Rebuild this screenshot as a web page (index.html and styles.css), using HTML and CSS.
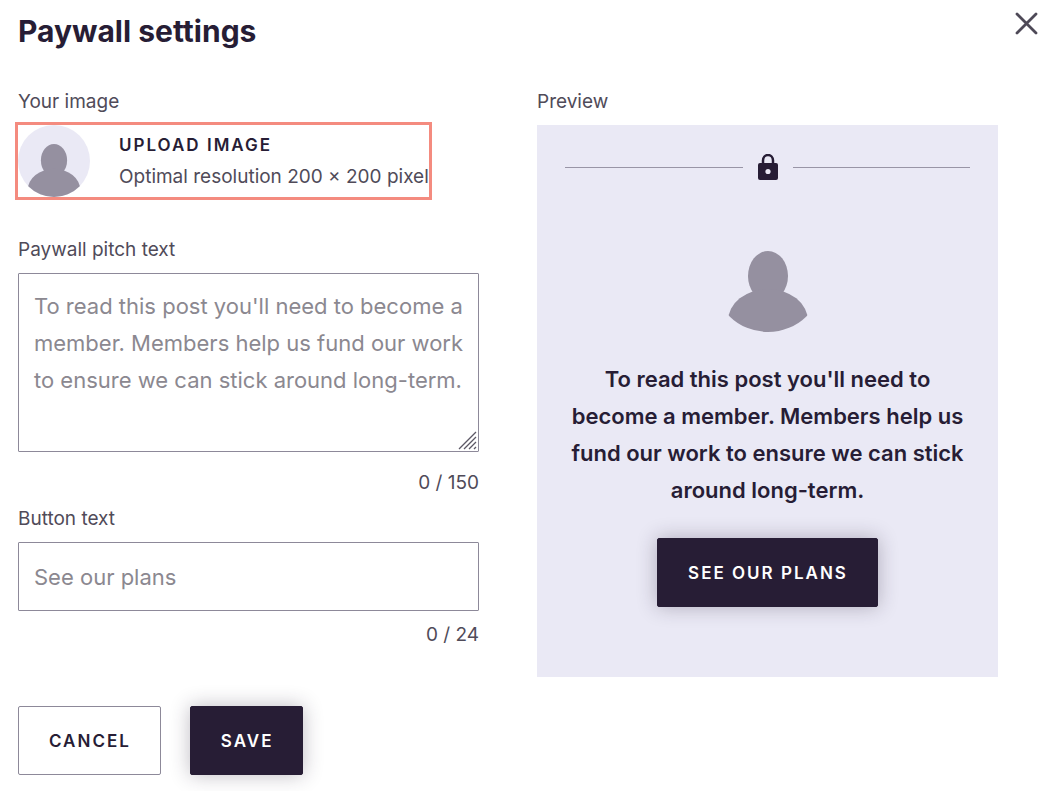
FILE: index.html
```html
<!DOCTYPE html>
<html lang="en">
<head>
  <meta charset="UTF-8" />
  <meta name="viewport" content="width=device-width, initial-scale=1.0" />
  <title>Paywall settings</title>
  <link rel="stylesheet" href="styles.css">
</head>
<body>
  <header>
    <h1>Paywall settings</h1>
    <button type="button" class="close" aria-label="Close">
      <svg width="24" height="24" viewBox="0 0 24 24">
        <path d="M3 3L22 22M22 3L3 22" fill="none" stroke="#4e4957" stroke-width="2.800" stroke-linecap="round" />
      </svg>
    </button>
  </header>

  <main>
    <form>
      <label class="label" for="uploadButton">Your image</label>
      <button type="button" class="upload" id="uploadButton">
        <svg class="avatar" viewBox="0 0 110 110">
          <clipPath id="round"><circle cx="55" cy="55" r="55" /></clipPath>
          <circle cx="55" cy="55" r="55" fill="#eae9f5" />
          <g clip-path="url(#round)" fill="#9590a0">
            <ellipse cx="55" cy="54" rx="20" ry="25" />
            <ellipse cx="55" cy="99" rx="40" ry="32" />
          </g>
        </svg>
        <span class="upload-text">
          <strong>Upload image</strong>
          <span>Optimal resolution 200 × 200 pixel</span>
        </span>
      </button>

      <label class="label" for="pitch">Paywall pitch text</label>
      <div class="textarea-wrap">
        <textarea id="pitch" maxlength="150" placeholder="To read this post you'll need to become a member. Members help us fund our work to ensure we can stick around long-term."></textarea>
        <svg class="grip" width="20" height="20" viewBox="0 0 20 20">
          <path d="M1 18L18 1M6 18L18 6M11 18L18 11M16 18L18 16" fill="none" stroke="#5c5865" stroke-width="1.300" />
        </svg>
      </div>
      <p class="count">0 / 150</p>

      <label class="label" for="buttonText">Button text</label>
      <input type="text" id="buttonText" maxlength="24" placeholder="See our plans" />
      <p class="count">0 / 24</p>

      <div class="actions">
        <button type="button" class="btn">Cancel</button>
        <button type="submit" class="btn btn-dark">Save</button>
      </div>
    </form>

    <section>
      <h2 class="label">Preview</h2>
      <div class="preview">
        <div class="divider">
          <svg width="20" height="26" viewBox="0 0 20 26">
            <path d="M5 11V6.500a5 5.500 0 0 1 10 0V11" fill="none" stroke="#271d35" stroke-width="2.500" />
            <rect y="9" width="20" height="17" rx="2" fill="#271d35" />
            <circle cx="10" cy="17.500" r="2.600" fill="#eae9f5" />
          </svg>
        </div>
        <svg class="avatar avatar-large" viewBox="0 0 110 110">
          <g clip-path="url(#round)" fill="#9590a0">
            <ellipse cx="55" cy="54" rx="20" ry="25" />
            <ellipse cx="55" cy="99" rx="40" ry="32" />
          </g>
        </svg>
        <p class="pitch">To read this post you'll need to become a member. Members help us fund our work to ensure we can stick around long-term.</p>
        <button type="button" class="btn btn-dark">See our plans</button>
      </div>
    </section>
  </main>
</body>
</html>
```
FILE: styles.css
```css
* {
  box-sizing: border-box;
}
body {
  margin: 0;
  padding: 11px 12px 16px 18px;
  background: #fff;
  color: #271d35;
  font-family: Inter, "Liberation Sans", sans-serif;
  font-size: 19px;
  line-height: 28px;
}
header {
  display: flex;
  justify-content: space-between;
  align-items: flex-start;
}
h1 {
  margin: 0;
  font-size: 30px;
  line-height: 40px;
}
button, input, textarea {
  font: inherit;
  color: inherit;
}
button {
  cursor: pointer;
}
svg {
  display: block;
}
.close {
  padding: 0;
  border: 0;
  background: none;
}
main {
  display: grid;
  grid-template-columns: 1fr 1fr;
  gap: 58px;
  margin: 37px 40px 0 0;
}
.label {
  display: block;
  margin: 0 0 9px;
  color: #504b59;
  font-size: 19px;
  font-weight: 400;
  line-height: 28px;
}
.upload {
  display: flex;
  align-items: center;
  gap: 29px;
  margin-bottom: 39px;
  padding: 0;
  border: 0;
  outline: 3px solid #f48b7f;
  background: none;
  text-align: left;
}
.avatar {
  width: 72px;
  height: 72px;
  flex: none;
}
.upload-text {
  display: flex;
  flex-direction: column;
  gap: 4px;
  color: #504b59;
  white-space: nowrap;
}
.upload-text strong {
  color: #271d35;
  font-size: 17px;
  font-weight: 600;
  letter-spacing: 2px;
  text-transform: uppercase;
}
input, textarea {
  display: block;
  width: 100%;
  margin: 0;
  padding: 14px 8px 14px 15px;
  border: 1px solid #8d8999;
  border-radius: 1px;
  background: #fff;
  font-size: 22px;
  line-height: 37px;
}
input {
  height: 69px;
}
textarea {
  height: 179px;
  resize: vertical;
  overflow: hidden;
}
textarea::-webkit-resizer {
  display: none;
}
::placeholder {
  color: #8b8890;
  opacity: 1;
}
.textarea-wrap {
  position: relative;
}
.grip {
  position: absolute;
  right: 1px;
  bottom: 1px;
  pointer-events: none;
}
.count {
  margin: 0;
  padding: 10px 0 8px;
  color: #504b59;
  text-align: right;
}
.textarea-wrap + .count {
  padding-top: 17px;
}
.actions {
  display: flex;
  gap: 29px;
  margin-top: 49px;
}
.btn {
  height: 69px;
  padding: 0 29px 0 30px;
  border: 1px solid #8d8999;
  border-radius: 2px;
  background: #fff;
  font-size: 17px;
  font-weight: 600;
  letter-spacing: 2px;
  text-transform: uppercase;
}
.btn-dark {
  border-color: #271d35;
  background: #271d35;
  color: #fff;
  box-shadow: 0 0 20px rgba(39, 29, 53, 0.3);
}
.preview {
  display: flex;
  flex-direction: column;
  align-items: center;
  padding: 29px 28px 70px;
  background: #eae9f5;
}
.divider {
  display: flex;
  align-items: center;
  align-self: stretch;
  gap: 15px;
}
.divider::before, .divider::after {
  content: "";
  flex: 1;
  height: 1px;
  background: #9995a6;
}
.avatar-large {
  width: 110px;
  height: 110px;
  margin-top: 42px;
}
.pitch {
  margin: 29px 0;
  font-size: 22px;
  font-weight: 600;
  line-height: 37px;
  text-align: center;
}
```
